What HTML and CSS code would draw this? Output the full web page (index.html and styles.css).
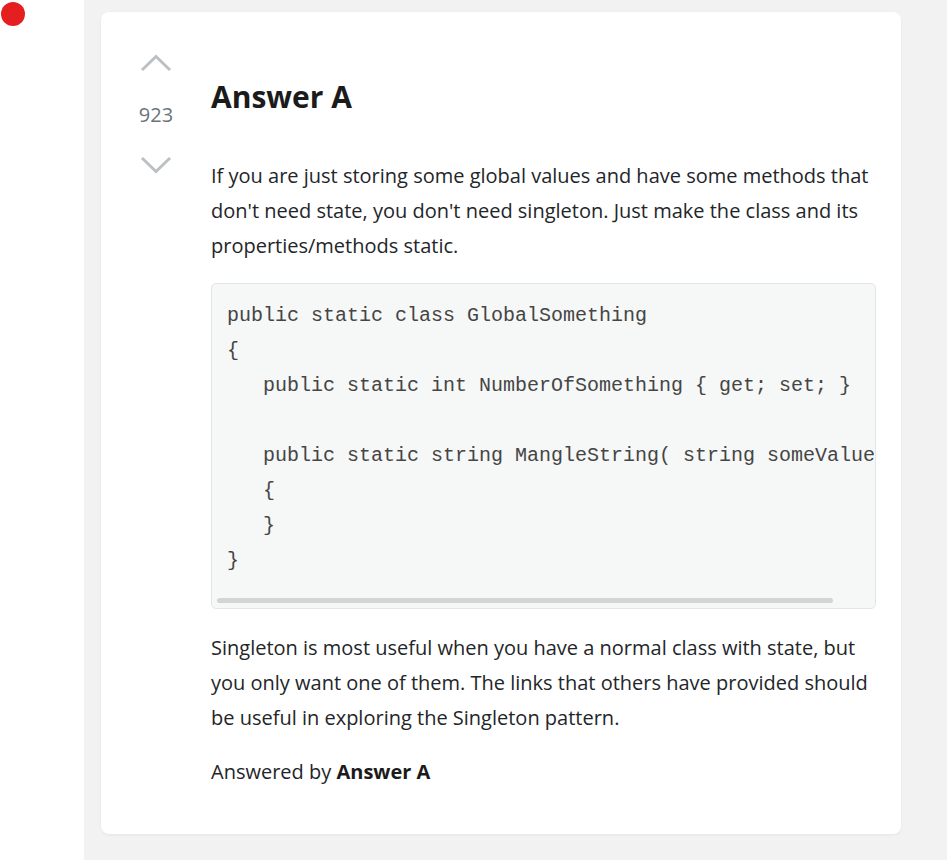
FILE: index.html
```html
<!DOCTYPE html>
<html lang="en">
<head>
<meta charset="utf-8">
<title>Answer A</title>
<link rel="stylesheet" href="styles.css">
</head>
<body>
<div class="page">
  <aside class="sidebar">
    <span class="dot"></span>
  </aside>
  <main class="main">
    <article class="card">
      <div class="votes">
        <svg class="arrow" width="32" height="18" viewBox="0 0 32 18" aria-hidden="true"><path d="M2 16 L16 2.5 L30 16" fill="none" stroke="#bbc0c4" stroke-width="3"/></svg>
        <span class="count">923</span>
        <svg class="arrow down" width="32" height="18" viewBox="0 0 32 18" aria-hidden="true"><path d="M2 2 L16 15.5 L30 2" fill="none" stroke="#bbc0c4" stroke-width="3"/></svg>
      </div>
      <div class="content">
        <h2 class="title">Answer A</h2>
        <p class="text first">If you are just storing some global values and have some methods that don't need state, you don't need singleton. Just make the class and its properties/methods static.</p>
        <div class="code-box">
          <pre class="code">public static class GlobalSomething
{
   public static int NumberOfSomething { get; set; }

   public static string MangleString( string someValue )
   {
   }
}</pre>
          <div class="scrollbar"><div class="thumb" style="width: 616px"></div></div>
        </div>
        <p class="text second">Singleton is most useful when you have a normal class with state, but you only want one of them. The links that others have provided should be useful in exploring the Singleton pattern.</p>
        <p class="text byline">Answered by <strong>Answer A</strong></p>
      </div>
    </article>
  </main>
</div>
</body>
</html>
```

FILE: styles.css
```css
html, body {
  margin: 0;
  padding: 0;
}
body {
  font-family: "Open Sans", "Noto Sans", sans-serif;
  color: #232629;
  background: #ffffff;
}
.page {
  display: flex;
  min-height: 100vh;
}
.sidebar {
  width: 84px;
  flex: 0 0 84px;
  background: #ffffff;
}
.dot {
  display: block;
  width: 24px;
  height: 24px;
  margin: 2px 0 0 1px;
  border-radius: 50%;
  background: #e51f1f;
}
.main {
  flex: 1;
  background: #f2f2f2;
  padding: 12px 46px 26px 17px;
}
.card {
  width: 800px;
  box-sizing: border-box;
  background: #ffffff;
  border-radius: 8px;
  box-shadow: 0 1px 3px rgba(0,0,0,0.06);
  display: flex;
  gap: 24px;
  padding: 42px 25px 45px 24px;
}
.votes {
  width: 62px;
  flex: 0 0 62px;
  display: flex;
  flex-direction: column;
  align-items: center;
}
.arrow {
  display: block;
}
.count {
  display: block;
  margin: 31px 0 0;
  font-size: 20px;
  line-height: 24px;
  color: #6a737c;
}
.arrow.down {
  margin-top: 29px;
}
.content {
  flex: 1;
  min-width: 0;
}
.title {
  margin: 23px 0 41px;
  font-size: 30px;
  line-height: 40px;
  font-weight: 700;
  color: #1b1b1b;
}
.text {
  margin: 0;
  font-size: 20px;
  line-height: 35px;
}
.text.first {
  margin-bottom: 20px;
}
.code-box {
  margin: 0 0 21px;
  background: #f6f7f7;
  border: 1px solid #e3e6e8;
  border-radius: 5px;
  overflow: hidden;
}
.code {
  margin: 0;
  padding: 14px 15px 18px;
  font-family: "Liberation Mono", "Courier New", monospace;
  font-size: 20px;
  line-height: 35px;
  color: #454545;
  overflow: hidden;
  white-space: pre;
}
.scrollbar {
  height: 12px;
  padding: 2px 0 0 5px;
  box-sizing: border-box;
}
.thumb {
  height: 5px;
  border-radius: 3px;
  background: #d4d4d4;
}
.text.second {
  margin-bottom: 19px;
}
.byline strong {
  font-weight: 700;
  color: #1b1b1b;
}
```
